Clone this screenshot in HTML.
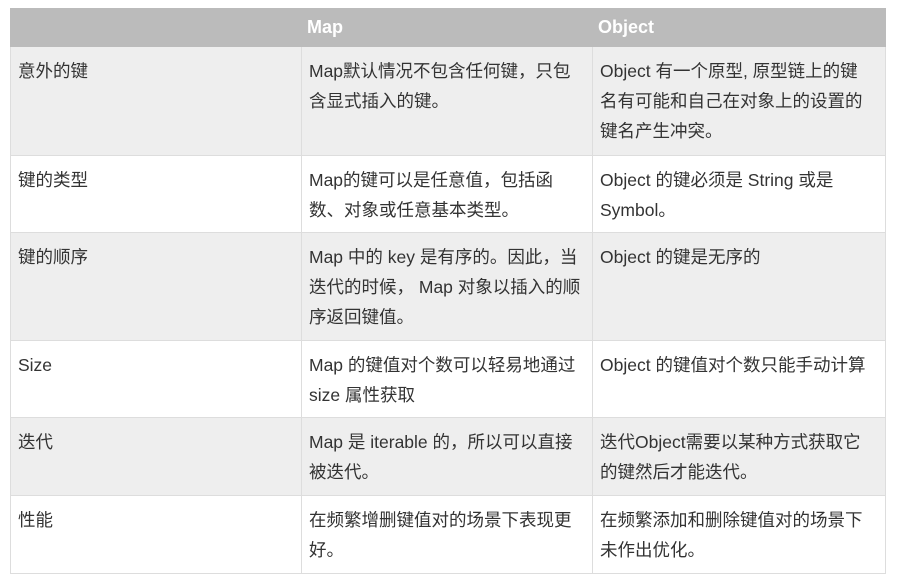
<!DOCTYPE html>
<html><head><meta charset="utf-8"><style>
body{margin:0;background:#fff;font-family:"Liberation Sans","Noto Sans CJK SC",sans-serif;}
table{position:absolute;left:10px;top:8px;border-collapse:collapse;table-layout:fixed;width:875px;}
td,th{border:1px solid #ddd;vertical-align:top;padding:9px 7px 0 7px;font-size:17.5px;line-height:30px;color:#333;white-space:nowrap;overflow:hidden;text-align:left;box-sizing:border-box}
th{background:#bbb;color:#fff;font-weight:bold;font-size:18px;height:38px;padding:3px 5px 0;border-color:#bbb}
tr.g td{background:#eee}
</style></head><body>
<table>
<colgroup><col style="width:291px"><col style="width:291px"><col style="width:293px"></colgroup>
<tr><th></th><th>Map</th><th>Object</th></tr>
<tr class="g" style="height:109px"><td>意外的键</td><td>Map默认情况不包含任何键，只包<br>含显式插入的键。</td><td>Object 有一个原型, 原型链上的键<br>名有可能和自己在对象上的设置的<br>键名产生冲突。</td></tr>
<tr style="height:77px"><td>键的类型</td><td>Map的键可以是任意值，包括函<br>数、对象或任意基本类型。</td><td>Object 的键必须是 String 或是<br>Symbol。</td></tr>
<tr class="g" style="height:108px"><td>键的顺序</td><td>Map 中的 key 是有序的。因此，当<br>迭代的时候， Map 对象以插入的顺<br>序返回键值。</td><td>Object 的键是无序的</td></tr>
<tr style="height:77px"><td>Size</td><td>Map 的键值对个数可以轻易地通过<br>size 属性获取</td><td>Object 的键值对个数只能手动计算</td></tr>
<tr class="g" style="height:78px"><td>迭代</td><td>Map 是 iterable 的，所以可以直接<br>被迭代。</td><td>迭代Object需要以某种方式获取它<br>的键然后才能迭代。</td></tr>
<tr style="height:78px"><td>性能</td><td>在频繁增删键值对的场景下表现更<br>好。</td><td>在频繁添加和删除键值对的场景下<br>未作出优化。</td></tr>
</table>
</body></html>
